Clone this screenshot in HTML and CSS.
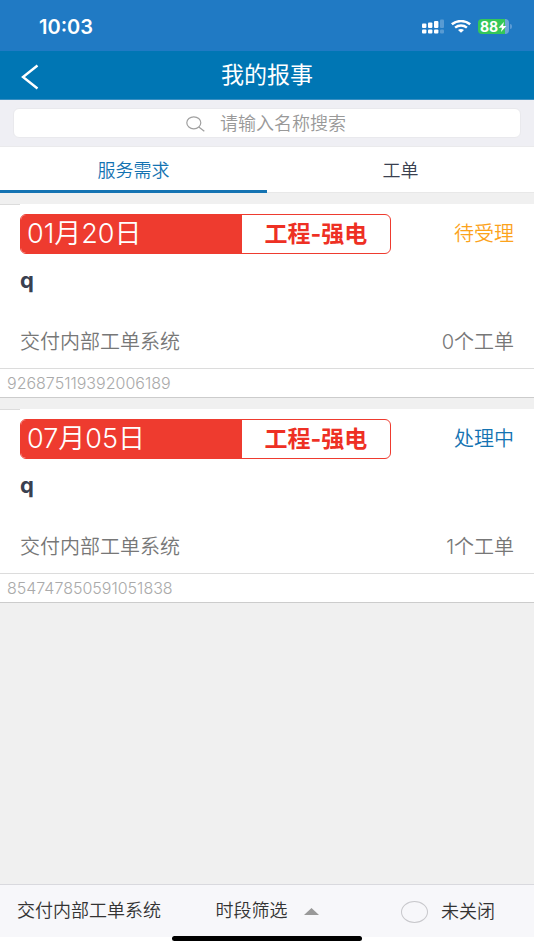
FILE: index.html
```html
<!DOCTYPE html>
<html lang="zh-CN">
<head>
    <meta charset="UTF-8">
    <meta name="viewport" content="width=device-width, initial-scale=1.0">
    <title>我的报事</title>
    <link rel="stylesheet" href="styles.css">
</head>
<body>
    <div class="status-bar">
        <span class="time">10:03</span>
        <div class="status-icons">
            <svg class="signal" width="22" height="15" viewBox="0 0 22 15" fill="#fff">
                <rect x="0" y="4.5" width="4.4" height="4.5" rx="1"/>
                <rect x="6" y="3.5" width="4.4" height="5.5" rx="1"/>
                <rect x="12" y="2" width="4.4" height="7" rx="1"/>
                <rect x="18" y="0.5" width="4" height="8.5" rx="1" opacity=".25"/>
                <rect x="0" y="10.6" width="4.4" height="4" rx="1"/>
                <rect x="6" y="10.6" width="4.4" height="4" rx="1"/>
                <rect x="12" y="10.6" width="4.4" height="4" rx="1"/>
                <rect x="18" y="10.6" width="4" height="4" rx="1" opacity=".25"/>
            </svg>
            <svg class="wifi" width="20" height="13" viewBox="0 0 20 13" fill="none" stroke="#fff" stroke-width="2.5">
                <path d="M0.8 4.3C6 0 14 0 19.2 4.3"/>
                <path d="M4.1 7.6C7.5 4.8 12.5 4.8 15.9 7.6"/>
                <path d="M7 10L10 12.8L13 10C11.4 8.6 8.6 8.6 7 10Z" fill="#fff" stroke="none"/>
            </svg>
            <div class="battery">
                <span>88</span>
                <svg width="9" height="10" viewBox="0 0 8 10" fill="#fff">
                    <path d="M5.4 0L0.1 5.8H3.5L2.4 10L7.9 4H4.6Z"/>
                </svg>
            </div>
        </div>
    </div>

    <header class="nav-bar">
        <button class="back" type="button" aria-label="返回">
            <svg width="18" height="26" viewBox="0 0 18 26" fill="none" stroke="#fff" stroke-width="2.4">
                <path d="M16.5 1.5L2 13L16.5 24.5"/>
            </svg>
        </button>
        <h1>我的报事</h1>
    </header>

    <form class="search">
        <label class="search-box">
            <svg width="19" height="16" viewBox="0 0 19 16" fill="none" stroke="#a0a0a0" stroke-width="1.2">
                <ellipse cx="7.8" cy="6.8" rx="7" ry="6"/>
                <path d="M12.8 11L18.3 15.3"/>
            </svg>
            <input type="text" placeholder="请输入名称搜索" aria-label="请输入名称搜索">
        </label>
    </form>

    <nav class="tabs">
        <button class="tab active" type="button">服务需求</button>
        <button class="tab" type="button">工单</button>
    </nav>

    <main>
        <article class="card">
            <div class="card-body">
                <div class="card-head">
                    <div class="badge">
                        <span class="date">01月20日</span>
                        <span class="type">工程-强电</span>
                    </div>
                    <span class="state pending">待受理</span>
                </div>
                <h2>q</h2>
                <div class="card-info">
                    <span>交付内部工单系统</span>
                    <span>0个工单</span>
                </div>
            </div>
            <div class="card-number">926875119392006189</div>
        </article>

        <article class="card">
            <div class="card-body">
                <div class="card-head">
                    <div class="badge">
                        <span class="date">07月05日</span>
                        <span class="type">工程-强电</span>
                    </div>
                    <span class="state doing">处理中</span>
                </div>
                <h2>q</h2>
                <div class="card-info">
                    <span>交付内部工单系统</span>
                    <span>1个工单</span>
                </div>
            </div>
            <div class="card-number">854747850591051838</div>
        </article>
    </main>

    <footer class="filter-bar">
        <button type="button">交付内部工单系统</button>
        <button type="button">
            时段筛选
            <svg width="15" height="7" viewBox="0 0 15 7" fill="#999"><path d="M0 7L7.5 0L15 7Z"/></svg>
        </button>
        <label class="closed">
            <input type="checkbox">
            <span>未关闭</span>
        </label>
    </footer>
    <div class="home-area"><div class="home-indicator"></div></div>
</body>
</html>
```
FILE: styles.css
```css
* {
    box-sizing: border-box;
}

body {
    margin: 0;
    min-height: 100vh;
    display: flex;
    flex-direction: column;
    background: #f0f0f0;
    color: #3a4050;
    font-family: Inter, "Noto Sans CJK SC", sans-serif;
    font-size: 18px;
    font-weight: 350;
    line-height: 24px;
}

button, input {
    font: inherit;
    color: inherit;
    border: none;
    background: none;
    padding: 0;
    margin: 0;
}

button {
    cursor: pointer;
}

svg {
    display: block;
    flex: none;
}

/* 状态栏 */
.status-bar {
    display: flex;
    justify-content: space-between;
    align-items: center;
    height: 51px;
    padding: 2px 25px 0 39px;
    background: #207ac4;
    color: #fff;
}

.time {
    font-size: 20px;
    font-weight: 600;
}

.status-icons {
    display: flex;
    align-items: center;
    gap: 7px;
}

.battery {
    position: relative;
    display: flex;
    align-items: center;
    justify-content: center;
    width: 31px;
    height: 15px;
    border-radius: 4px;
    background: linear-gradient(to right, #34c759 88%, #6ba6d8 88%);
    font-size: 14px;
    font-weight: 700;
    line-height: 15px;
}

.battery::after {
    content: "";
    position: absolute;
    left: 32px;
    top: 5px;
    width: 2px;
    height: 5px;
    border-radius: 0 2px 2px 0;
    background: #5b9bd5;
}

/* 标题栏 */
.nav-bar {
    display: grid;
    grid-template-columns: 40px 1fr 40px;
    align-items: center;
    height: 49px;
    background: #0076b4;
    border-bottom: 1px solid #3a8fc2;
    color: #fff;
}

.back {
    padding: 4px 0 0 21px;
}

h1 {
    margin: 0;
    font-size: 23px;
    font-weight: 400;
    text-align: center;
}

/* 搜索 */
.search {
    padding: 8px 13px;
    background: #efeff4;
    border-bottom: 1px solid #eaeaec;
}

.search-box {
    display: flex;
    align-items: center;
    justify-content: center;
    gap: 15px;
    height: 30px;
    padding-top: 2px;
    border: 1px solid #e9e9ed;
    border-radius: 6px;
    background: #fff;
}

.search-box input {
    width: 128px;
    outline: none;
}

.search-box input::placeholder {
    color: #999;
    opacity: 1;
}

/* 选项卡 */
.tabs {
    display: flex;
    height: 46px;
    background: #fff;
    border-bottom: 1px solid #e8e8e8;
}

.tab {
    flex: 1;
    height: 46px;
    padding-top: 4px;
    border-bottom: 3px solid transparent;
}

.tab.active {
    color: #1473b2;
    border-bottom-color: #1473b2;
}

/* 列表 */
main {
    flex: 1;
}

.card {
    margin-top: 11px;
    background: linear-gradient(#dcdcdc, #dcdcdc) 0 0 / 20px 1px no-repeat #fff;
    border-bottom: 1px solid #ccc;
}

.card-body {
    padding: 10px 20px 14px;
    border-bottom: 1px solid #dcdcdc;
}

.card-head {
    display: flex;
    justify-content: space-between;
    align-items: center;
}

.badge {
    display: flex;
    flex: 0 0 75%;
    height: 40px;
    border: 1px solid #ee3b2f;
    border-radius: 6px;
    overflow: hidden;
}

.date {
    flex: 0 0 60%;
    padding-left: 6px;
    background: #ee3b2f;
    color: #fff;
    font-size: 27px;
    line-height: 38px;
}

.type {
    flex: 1;
    color: #ee3024;
    font-size: 23px;
    font-weight: 700;
    line-height: 38px;
    text-align: center;
}

.state {
    font-size: 20px;
}

.pending {
    color: #fca31c;
}

.doing {
    color: #1473b2;
}

h2 {
    margin: 12px 0 36px;
    font-size: 22px;
    font-weight: 700;
    line-height: 28px;
}

.card-info {
    display: flex;
    justify-content: space-between;
    color: #777;
    font-size: 20px;
}

.card-number {
    padding: 2px 7px;
    color: #aaa;
    font-size: 16px;
}

/* 底部筛选 */
.filter-bar {
    display: grid;
    grid-template-columns: repeat(3, 1fr);
    height: 53px;
    background: #f7f7fa;
    border-top: 1px solid #d9d9de;
    color: #333;
}

.filter-bar button,
.closed {
    display: flex;
    align-items: center;
    justify-content: center;
    gap: 16px;
}

.closed {
    gap: 13px;
    padding: 2px 0 0 6px;
}

.closed input {
    appearance: none;
    width: 27px;
    height: 22px;
    border: 1px solid #c8c8cc;
    border-radius: 50%;
}

.closed input:checked {
    background: #1473b2;
}

.home-area {
    position: relative;
    height: 13px;
    background: #fff;
}

.home-indicator {
    position: absolute;
    top: -1px;
    left: 50%;
    width: 190px;
    height: 5px;
    margin-left: -95px;
    border-radius: 3px;
    background: #000;
}
```
